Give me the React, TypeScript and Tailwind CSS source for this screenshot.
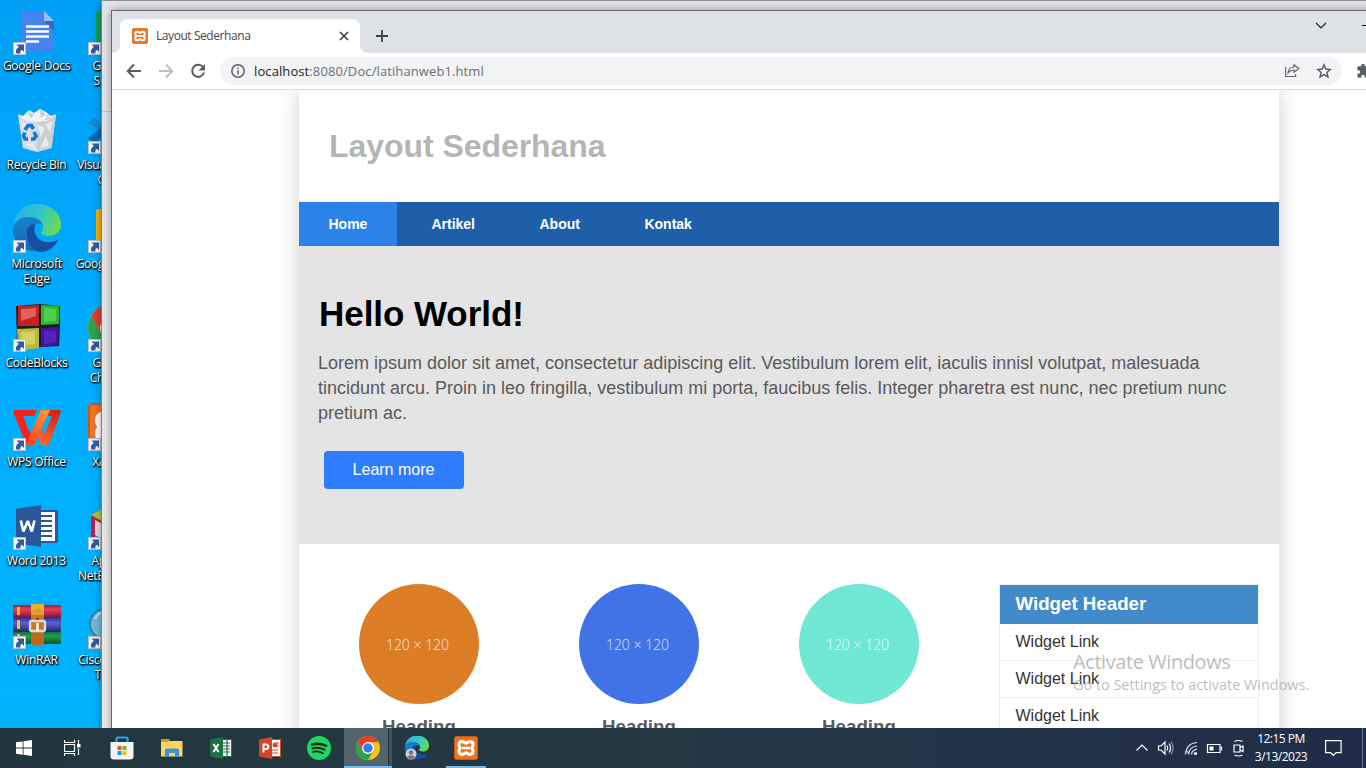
import type { ReactNode } from "react";

function ShortcutArrow() {
  return (
    <g>
      <rect x="0.5" y="35.5" width="12" height="12" fill="#f7f7f7" stroke="#b9bcc0" />
      <path d="M3.500 37.500h7.500V45L8.800 42.800c-1.300 1-1.700 2.200-1.300 3.700H3.300C2.300 43.300 3.700 40.800 6 39.900Z" fill="#2f5c9e" />
    </g>
  );
}

function DocsIcon() {
  return (
    <g>
      <path d="M9 4h22l10 10v28a2 2 0 0 1-2 2H10a2 2 0 0 1-2-2V6a2 2 0 0 1 1-2Z" fill="#4583f0" />
      <path d="M31 4v10h10Z" fill="#9dbff9" />
      <path d="M31 14h10v10Z" fill="#3567cf" />
      <path d="M13 19.500h23M13 24.500h23M13 29.500h23M13 34.500h13" stroke="#fff" strokeWidth="2.400" />
    </g>
  );
}

function BinIcon() {
  return (
    <g>
      <path d="M5 9l5 33 14 4 14.500-4L43 9l-9 3H14Z" fill="#d9dde0" />
      <path d="M24 12h10l9-3-4.500 33L24 46Z" fill="#c9ced2" />
      <path d="M8 12l8-8 5 3 6-4 6 3 7 6-6 3-10 1-10-1Z" fill="#f0f2f3" />
      <path d="M15 6l6 2-3 5ZM27 4l6 4-5 4ZM34 8l5 5-7 1Z" fill="#c9ced2" />
      <path d="M5 9l19 5 19-5" stroke="#f8fafa" strokeWidth="1" fill="none" />
      <path d="M24 18l8 4-4 9ZM33 30l-6 12 9-2ZM12 38l8-1 3 7Z" fill="#e9ecee" />
      <path d="M32 18l8-3-3 12ZM8 16l6 2-4 6Z" fill="#e4e7e9" />
      <g fill="none" stroke="#0f7cd6" strokeWidth="3.600">
        <path d="M12 24l3-4.500h3.500l2 3.500" />
        <path d="M21 26l2 4-2 3h-3" />
        <path d="M15 33h-3l-1.500-3.500 1.500-3" />
      </g>
    </g>
  );
}

function EdgeIcon() {
  return (
    <g>
      <defs>
        <linearGradient id="edgeTop" x1="0" y1="0.300" x2="1" y2="0.600">
          <stop offset="0" stopColor="#2aaee4" />
          <stop offset="0.500" stopColor="#34c3cf" />
          <stop offset="1" stopColor="#68dc49" />
        </linearGradient>
        <linearGradient id="edgeMid" x1="0" y1="0" x2="0.300" y2="1">
          <stop offset="0" stopColor="#1485cf" />
          <stop offset="1" stopColor="#1a66b5" />
        </linearGradient>
      </defs>
      <path d="M0 22C1 8 11 -1 24 -1c14 0 24 9 24 20 0 8-6 12-12 12-5 0-8-1.500-8-3 0-1.500 2-2 2-6 0-5-6-10-14-10C8 12 3 15 0 22Z" fill="url(#edgeTop)" />
      <path d="M0 24c1-8 8-12 15-12 9 0 14 4 15 9-1-2-4-3-7-2-4 4-5 9-3 15 2 5 5 9 10 11.500C12 49 0 39 0 24Z" fill="url(#edgeMid)" />
      <path d="M22 19c-7 1-9 6-8 12 2 10 8 16 15 16 7-1 12-5 15.500-10.500.5-1-.2-1.500-1-1-9 4-20 1-22-9-.3-3 .1-6 .5-7.500Z" fill="#124f9e" />
    </g>
  );
}

function BlocksIcon() {
  return (
    <g>
      <path d="M3 2l24-2 20 2v19l-1 21-20 1-12 3-10-5Z" fill="#122015" />
      <path d="M5 2l21-1v21L5 22Z" fill="#c81f1f" />
      <path d="M8 5l15-1v8L8 17Z" fill="#e0605a" />
      <path d="M28 1l18 1v18l-18 1Z" fill="#30b534" />
      <path d="M31 4l12 1v12l-12 1Z" fill="#4bcf4d" />
      <path d="M4 25l22-1v20l-12 2-9-4Z" fill="#bdb83b" />
      <path d="M8 28l14-1v13l-14 1Z" fill="#d6d060" />
      <path d="M28 24l18-1-1 18-17 2Z" fill="#4112a5" />
      <path d="M31 27h12v11l-12 2Z" fill="#5424b8" />
    </g>
  );
}

function WpsIcon() {
  return (
    <g>
      <defs>
        <linearGradient id="wpsBar" x1="1" y1="0" x2="0.400" y2="1">
          <stop offset="0" stopColor="#ff9a3c" />
          <stop offset="1" stopColor="#fb4a1e" />
        </linearGradient>
        <linearGradient id="wpsEnd" x1="0.800" y1="0" x2="0.300" y2="1">
          <stop offset="0" stopColor="#d81d10" />
          <stop offset="1" stopColor="#ff6a2a" />
        </linearGradient>
      </defs>
      <path d="M2 7h22l-2.500 6H10.500L20 36v7h-4q-2 0-3-2L.3 9.500Q-.2 7 2 7Z" fill="#fb2318" />
      <path d="M34 7h12q2.500 0 1.800 2.500L36 41q-1 2-3 2h-2q-2 0-3-2l-5-12 3.500-9 4.500 12 8-19H32Z" fill="url(#wpsEnd)" />
      <path d="M28 7h9L22 41q-1 2-3 2h-3q-2 0-3-2Z" fill="url(#wpsBar)" />
      <path d="M10.500 13h11L15.500 28Z" fill="#00aefd" />
    </g>
  );
}

function WordIcon() {
  return (
    <g>
      <path d="M25 8h18a2 2 0 0 1 2 2v29a2 2 0 0 1-2 2H25Z" fill="#2b569a" />
      <path d="M26 10h16v29H26Z" fill="#fff" />
      <path d="M28 14h11M28 19h11M28 24h11M28 29h11M28 34h11" stroke="#2b569a" strokeWidth="2.200" />
      <path d="M3 7l25-4v42L3 41Z" fill="#2b569a" />
      <path d="M7.800 18.500l2.600 11L14.800 19l4 10.500 2.700-11" fill="none" stroke="#fff" strokeWidth="2.600" strokeLinejoin="bevel" />
    </g>
  );
}

function RarIcon() {
  return (
    <g>
      <defs>
        <linearGradient id="rarRed" x1="0" y1="0" x2="0" y2="1">
          <stop offset="0" stopColor="#a91d3b" /><stop offset="0.350" stopColor="#e43e5c" /><stop offset="1" stopColor="#7d132b" />
        </linearGradient>
        <linearGradient id="rarBlue" x1="0" y1="0" x2="0" y2="1">
          <stop offset="0" stopColor="#33339c" /><stop offset="0.350" stopColor="#5d60d2" /><stop offset="1" stopColor="#24246f" />
        </linearGradient>
        <linearGradient id="rarGreen" x1="0" y1="0" x2="0" y2="1">
          <stop offset="0" stopColor="#0c7733" /><stop offset="0.350" stopColor="#22a14d" /><stop offset="1" stopColor="#07521f" />
        </linearGradient>
      </defs>
      <rect x="0" y="4" width="48" height="13" rx="1" fill="url(#rarRed)" />
      <rect x="0" y="17" width="48" height="14" rx="1" fill="url(#rarBlue)" />
      <rect x="0" y="31" width="48" height="12" rx="1" fill="url(#rarGreen)" />
      <path d="M4 6h3v8H4ZM4 19h3v9H4ZM4 33h3v8H4Z" fill="#f6bd26" />
      <path d="M18 3h13v41H18Z" fill="#bb6b1d" />
      <path d="M18 3h13v10H18Z" fill="#eab22d" />
      <path d="M18 12c2-5 11-5 13 0v17H18Z" fill="#c97723" />
      <path d="M18 12c2-5 11-5 13 0v2H18Z" fill="#e09a38" />
      <circle cx="24.500" cy="18" r="1.300" fill="#54300f" />
      <rect x="17" y="20" width="15" height="10" rx="2" fill="none" stroke="#d9dde2" strokeWidth="2.400" />
      <path d="M24.500 22v8" stroke="#f4f4f4" strokeWidth="2.500" />
    </g>
  );
}

function XamppGlyph() {
  return (
    <g>
      <rect x="0.500" y="0.500" width="23" height="23" rx="2" fill="#ee7424" stroke="#c85a16" />
      <path d="M8.200 5.600c2 0 2.400 1.600 3.800 1.600s1.800-1.600 3.800-1.600c2.200 0 3.300 1.500 3.300 3.300 0 1.600-1.200 2-1.200 3.100s1.200 1.500 1.200 3.100c0 1.800-1.100 3.300-3.300 3.300-2 0-2.400-1.600-3.800-1.600s-1.800 1.600-3.800 1.600c-2.200 0-3.300-1.500-3.300-3.300 0-1.600 1.200-2 1.200-3.100S4.900 10.500 4.900 8.900c0-1.800 1.100-3.300 3.300-3.300Z" fill="none" stroke="#fff" strokeWidth="3" />
      <path d="M8 12h8" stroke="#fff" strokeWidth="2.600" />
    </g>
  );
}

function ChromeGlyph() {
  return (
    <g>
      <circle cx="24" cy="24" r="24" fill="#fbc116" />
      <path d="M3.200 12A24 24 0 0 0 24 48L34.400 30 24 24 13.600 30Z" fill="#2ba24c" />
      <path d="M24 12h20.800L34 30Z" fill="#fbc116" />
      <path d="M3.200 12A24 24 0 0 1 44.800 12H24L13 29Z" fill="#e33b2e" />
      <circle cx="24" cy="24" r="12" fill="#fff" />
      <circle cx="24" cy="24" r="9.500" fill="#3a7cec" />
    </g>
  );
}

type Shortcut = { label: string[]; art: ReactNode; arrow?: boolean };

const columnOne: Shortcut[] = [
  { label: ["Google Docs"], art: <DocsIcon /> },
  { label: ["Recycle Bin"], art: <BinIcon />, arrow: false },
  { label: ["Microsoft", "Edge"], art: <EdgeIcon /> },
  { label: ["CodeBlocks"], art: <BlocksIcon /> },
  { label: ["WPS Office"], art: <WpsIcon /> },
  { label: ["Word 2013"], art: <WordIcon /> },
  { label: ["WinRAR"], art: <RarIcon /> },
];

const columnTwo: Shortcut[] = [
  { label: ["Google", "Sheets"], art: <g><rect x="8" y="4" width="33" height="40" rx="2" fill="#129d58" /><path d="M13 18h22v18H13Z" fill="#fff" /></g> },
  { label: ["Visual Studio", "Code"], art: <g><path d="M0 17l6-5 42 28-8 6Z" fill="#1688d6" /><path d="M0 32l6 5L48 8l-9-6Z" fill="#0667ae" /></g> },
  { label: ["Google Slides"], art: <g><rect x="8" y="4" width="33" height="40" rx="2" fill="#f2b10c" /><path d="M13 17h22v16H13Z" fill="#fff" /></g> },
  { label: ["Google", "Chrome"], art: <ChromeGlyph /> },
  { label: ["XAMPP"], art: <g transform="scale(2)"><XamppGlyph /></g> },
  { label: ["Apache", "NetBeans I..."], art: <g><path d="M3 13L24 1v23L3 37Z" fill="#b3234d" /><path d="M3 13L24 1l21 12-21 12Z" fill="#a5c73a" /><path d="M7 18l17 9v15L7 33Z" fill="#e7dce0" /></g> },
  { label: ["Cisco Packet", "Tracer"], art: <g><circle cx="17" cy="23" r="15" fill="#6fb9dd" stroke="#39718f" strokeWidth="1.500" /><path d="M7 18c2-5 7-7 11-7" stroke="#c3e6f5" strokeWidth="2" fill="none" /></g> },
];

function ShortcutColumn({ items }: { items: Shortcut[] }) {
  return (
    <div className="flex w-[75px] shrink-0 flex-col">
      {items.map((s) => (
        <div key={s.label[0] + s.label[1]} className="flex h-[99px] flex-col items-center gap-[3px]">
          <svg width="48" height="48" viewBox="0 0 48 48" className="shrink-0 overflow-visible">
            {s.art}
            {s.arrow !== false && <ShortcutArrow />}
          </svg>
          <div className="text-center text-[12px] leading-[15px] tracking-[-0.25px] whitespace-nowrap text-white [text-shadow:1px_1px_2px_#000,0_1px_2px_#000,1px_1px_1px_rgba(0,0,0,0.8)]">
            {s.label.map((line) => <div key={line}>{line}</div>)}
          </div>
        </div>
      ))}
    </div>
  );
}

function TabStrip() {
  return (
    <div className="flex h-[42px] shrink-0 items-end bg-[#dee1e6]">
      <svg width="8" height="34" className="shrink-0"><path d="M8 26v8H0a8 8 0 0 0 8-8Z" fill="#fff" /></svg>
      <div className="flex h-[34px] w-[240px] items-center rounded-t-lg bg-white pr-[11px] pl-3">
        <svg width="16" height="16" viewBox="0 0 24 24"><XamppGlyph /></svg>
        <span className="ml-2 text-[12px] tracking-[-0.43px] whitespace-nowrap text-[#45484c]">Layout Sederhana</span>
        <svg width="10" height="10" className="ml-auto"><path d="M1 1l8 8M9 1l-8 8" stroke="#3c4043" strokeWidth="1.700" /></svg>
      </div>
      <svg width="8" height="34" className="shrink-0"><path d="M0 26v8h8a8 8 0 0 1-8-8Z" fill="#fff" /></svg>
      <svg width="13" height="34" className="ml-[7px]"><path d="M7 11v12M1 17h12" stroke="#3c4043" strokeWidth="1.800" /></svg>
      <div className="flex h-[42px] flex-1 pt-[11px]">
        <svg width="12" height="8" className="ml-[927px] shrink-0"><path d="M1 1l5 5 5-5" fill="none" stroke="#222" strokeWidth="1.200" /></svg>
        <svg width="12" height="8" className="ml-[35px] shrink-0"><path d="M0 3.500h12" stroke="#111" /></svg>
      </div>
    </div>
  );
}

function Toolbar() {
  return (
    <div className="flex h-[37px] shrink-0 items-center border-b border-[#dadce0] bg-white">
      <svg width="108" height="36" className="shrink-0">
        <g fill="none" strokeWidth="2">
          <path d="M29 18H16M22 11.500L15.700 18l6.300 6.500" stroke="#5a5e63" />
          <path d="M47 18h13M54 11.500L60.300 18 54 24.500" stroke="#bcbec1" />
          <path d="M91 14.200A6 6 0 1 0 92 19.500" stroke="#5a5e63" />
        </g>
        <path d="M93 11v6.500h-6.500Z" fill="#5a5e63" />
      </svg>
      <div className="flex h-7 w-[1122px] shrink-0 items-center rounded-full bg-[#f1f3f4] pr-[10px] pl-[11px]">
        <svg width="14" height="14" className="shrink-0"><circle cx="7" cy="7" r="6.200" fill="none" stroke="#5f6368" strokeWidth="1.500" /><path d="M7 6.200v4.300M7 3.500v1.600" stroke="#5f6368" strokeWidth="1.500" /></svg>
        <span className="mt-px ml-[9px] text-[13px] tracking-[0.1px] whitespace-nowrap text-[#6b6f74]"><span className="text-[#222427]">localhost</span>:8080/Doc/latihanweb1.html</span>
        <svg width="16" height="16" className="ml-auto" fill="none" stroke="#65696e" strokeWidth="1.200"><path d="M1.600 4v9.500h10V11M4 10c.5-4 3-6 6-6V1.800L14.800 5.500 10 9.300V7C7 7 5.500 8 4 10Z" /></svg>
        <svg width="16" height="16" viewBox="0 0 24 24" className="ml-[16px]"><path d="M12 2.800l2.700 6.300 6.800.6-5.200 4.500 1.600 6.700-5.900-3.600-5.900 3.600 1.600-6.700-5.200-4.500 6.800-.6Z" fill="none" stroke="#5a5e63" strokeWidth="2.200" /></svg>
      </div>
      <svg width="16" height="16" viewBox="0 0 24 24" className="ml-[14px] shrink-0"><path d="M20.500 11H19V7a2 2 0 0 0-2-2h-4V3.500a2.500 2.500 0 0 0-5 0V5H4a2 2 0 0 0-2 2v3.800h1.500a2.700 2.700 0 0 1 0 5.400H2V20a2 2 0 0 0 2 2h3.800v-1.500a2.700 2.700 0 0 1 5.400 0V22H17a2 2 0 0 0 2-2v-4h1.500a2.500 2.500 0 0 0 0-5Z" fill="#5a5e63" /></svg>
    </div>
  );
}

const circles = ["bg-[#db7e25]", "bg-[#3f73e6]", "bg-[#71e8d5]"];

function Site() {
  return (
    <div className="min-h-0 flex-1 overflow-hidden bg-white pl-[187px] [font-family:'Liberation_Sans',Arial,sans-serif]">
      <div className="h-[900px] w-[980px] bg-white shadow-[0_0_20px_rgba(0,0,0,0.2)]">
        <header className="flex h-28 items-center pl-[30px]">
          <h1 className="text-[32px] leading-9 font-bold tracking-[-0.05px] text-[#b5b5b5]">Layout Sederhana</h1>
        </header>
        <nav className="flex h-11 gap-[4.500px] bg-[#1f5faa] text-[14px] leading-[44px] font-bold text-white">
          <a className="bg-[#2b83ea] px-[29.500px]">Home</a>
          <a className="px-[30px]">Artikel</a>
          <a className="px-[30px]">About</a>
          <a className="px-[30px]">Kontak</a>
        </nav>
        <section className="h-[298px] bg-[#e4e4e4] px-5 pt-[47px]">
          <h1 className="text-[35px] leading-[42px] font-bold tracking-[-0.05px] text-black">Hello World!</h1>
          <p className="mt-[16px] -ml-px text-[18px] leading-[25px] text-[#5a5a5a]">Lorem ipsum dolor sit amet, consectetur adipiscing elit. Vestibulum lorem elit, iaculis innisl volutpat, malesuada tincidunt arcu. Proin in leo fringilla, vestibulum mi porta, faucibus felis. Integer pharetra est nunc, nec pretium nunc pretium ac.</p>
          <a className="mt-[25px] ml-[5px] flex h-[38px] w-[140px] items-center justify-center rounded bg-[#2f7dff] pr-px text-base text-white">Learn more</a>
        </section>
        <div className="flex pt-10 pl-[10px]">
          {circles.map((c) => (
            <div key={c} className="flex w-[220px] flex-col items-center">
              <div className={"flex h-[120px] w-[120px] items-center justify-center rounded-full pr-[3px] text-[14px] font-light text-white/80 [font-family:'Open_Sans',sans-serif] " + c}>120 × 120</div>
              <h3 className="mt-[11px] text-[18.720px] leading-6 font-bold text-[#5a5a5a]">Heading</h3>
            </div>
          ))}
          <aside className="ml-[30px] w-[260px] border border-[#eee]">
            <h3 className="h-[39px] bg-[#428bca] pl-[15.500px] text-[18.720px] leading-[37px] font-bold text-white">Widget Header</h3>
            {[1, 2, 3].map((n) => (
              <a key={n} className="block h-[37px] border-b border-[#eee] pl-[15.500px] text-base leading-[35px] text-[#333]">Widget Link</a>
            ))}
          </aside>
        </div>
      </div>
    </div>
  );
}

function TaskButton({ children, className = "" }: { children: ReactNode; className?: string }) {
  return <div className={"flex h-10 w-[49px] shrink-0 items-center justify-center " + className}>{children}</div>;
}

function Taskbar() {
  return (
    <div className="flex h-10 shrink-0 bg-linear-to-r from-[#21363e] via-[#243944] to-[#202c49] text-white">
      <TaskButton className="pr-[2px]">
        <svg width="16" height="16"><path d="M0 2.300L6.700 1.400V7.500H0ZM7.500 1.300L16 0v7.500H7.500ZM0 8.500h6.700v6.200L0 13.800ZM7.500 8.500H16V16L7.500 14.800Z" fill="#fff" /></svg>
      </TaskButton>
      <TaskButton className="pr-[3px]">
        <svg width="17" height="16" fill="none" stroke="#fff"><path d="M.5 0v2.500h10V0M.5 4.500h10v7H.5ZM.5 16v-2.500h10V16M14.500 0v4M14.500 8.500V15" strokeWidth="1.200" /><rect x="13.500" y="4.500" width="2.500" height="2.500" fill="#fff" /></svg>
      </TaskButton>
      <TaskButton className="pr-px">
        <svg width="24" height="24"><path d="M6.500 8V2.500Q6.500 1.500 7.500 1.500H16.500Q17.500 1.500 17.500 2.500V8" fill="none" stroke="#24a8e0" strokeWidth="2.200" /><path d="M.5 6h23v14a3.500 3.500 0 0 1-3.500 3.500H4A3.500 3.500 0 0 1 .5 20Z" fill="#f4f4f4" /><path d="M7.500 10h4v4h-4Z" fill="#f25022" /><path d="M12.500 10h4v4h-4Z" fill="#7fba00" /><path d="M7.500 15h4v4h-4Z" fill="#00a4ef" /><path d="M12.500 15h4v4h-4Z" fill="#ffb900" /></svg>
      </TaskButton>
      <TaskButton>
        <svg width="22" height="18"><path d="M0 2h21.500v15.500H0Z" fill="#fcd466" /><path d="M0 0h9l-2 3H0Z" fill="#dc9c0f" /><path d="M4 18v-7q0-1.500 1.500-1.500h11Q18 9.500 18 11v7h-4v-4H8v4Z" fill="#3c95d8" /></svg>
      </TaskButton>
      <TaskButton>
        <svg width="22" height="22"><path d="M12 2.500h9.500v17H12Z" fill="#fff" stroke="#1e7145" /><path d="M13 6h7M13 9h7M13 12h7M13 15h7M17 3v16" stroke="#1e7145" strokeWidth="1.200" /><path d="M0 2.500L13 0v22L0 19.500Z" fill="#1e7145" /><path d="M3.500 7l5 8M8.500 7l-5 8" stroke="#fff" strokeWidth="1.900" /></svg>
      </TaskButton>
      <TaskButton>
        <svg width="22" height="22"><path d="M12 2.500h9.500v17H12Z" fill="#fff" stroke="#d24726" /><circle cx="16" cy="8" r="2.500" fill="#d24726" /><path d="M13 13h6M13 16h6M17 6h3M17 9h3" stroke="#d24726" strokeWidth="1.200" /><path d="M0 2.500L13 0v22L0 19.500Z" fill="#d24726" /><path d="M4.500 15.500V7.500H7a2.200 2.200 0 0 1 0 4.600H4.500" fill="none" stroke="#fff" strokeWidth="1.900" /></svg>
      </TaskButton>
      <TaskButton>
        <svg width="24" height="24" fill="none" strokeLinecap="round"><circle cx="12" cy="12" r="12" fill="#1ed760" /><path d="M5 8.500c4.500-1.300 9.500-1 14 1.300" stroke="#12251c" strokeWidth="2.400" /><path d="M5.500 12.500c4.200-1.200 8.300-.7 12 1.200" stroke="#12251c" strokeWidth="2" /><path d="M6 16c3.500-1 7-.5 10 1.200" stroke="#12251c" strokeWidth="1.700" /></svg>
      </TaskButton>
      <div className="ml-px flex h-10 w-12 shrink-0 border-b-2 border-[#76b9ed]">
        <div className="flex w-11 items-center justify-center bg-[#53646c] pt-[2px] pl-1"><svg width="24" height="24" viewBox="0 0 48 48"><ChromeGlyph /></svg></div>
        <div className="w-1 border-l border-[#26363e] bg-[#44545c]" />
      </div>
      <TaskButton>
        <svg width="24" height="24" viewBox="0 0 48 48"><EdgeIcon /><circle cx="12" cy="36" r="11" fill="#d1d1d1" /><circle cx="12" cy="33" r="4.500" fill="#777" /><path d="M4 43c1-6 15-6 16 0-5 4-11 4-16 0Z" fill="#777" /></svg>
      </TaskButton>
      <div className="ml-[5px] flex h-10 w-10 shrink-0 items-center justify-center border-b-2 border-[#76b9ed] pt-[2px]"><svg width="24" height="24"><XamppGlyph /></svg></div>
      <div className="ml-auto flex shrink-0 items-center">
        <svg width="110" height="40" fill="none" stroke="#fff" strokeWidth="1.200">
          <path d="M0.500 22.500L6 17l5.500 5.500" />
          <path d="M22.500 18h2.500l4-4v12l-4-4h-2.500Z" />
          <path d="M31 17.500q1.500 2.500 0 5M33 15.500q3 4.500 0 9" />
          <path d="M35 13.500q4 6.500 0 13" stroke="#8d99a5" />
          <path d="M49.500 26.500Q50 15.500 61 14.500M52.500 26.500Q53 19 61 18M55.500 26.500Q56 22 61 21.200" stroke="#d7dde2" />
          <path d="M50 22l3 4" stroke="#d7dde2" />
          <circle cx="59.500" cy="25.500" r="1.600" fill="#fff" stroke="none" />
          <path d="M71.500 16.500h12.500v8H71.500ZM85.500 18.500v4" />
          <path d="M73.500 18.500h4v4h-4Z" fill="#fff" stroke="none" />
          <path d="M98 17h6v7h-6ZM104 19.500l3-1.500v5.500l-3-1.500M98.500 13.500q4-2 8 0M98.500 27q4 2 8 0" />
        </svg>
        <div className="w-[70px] text-center text-[12px] leading-[18px] tracking-[-0.5px] whitespace-nowrap"><div>12:15 PM</div><div>3/13/2023</div></div>
        <svg width="17" height="18" className="ml-[9px]" fill="none" stroke="#fff" strokeWidth="1.200"><path d="M.6 1.600h15.500v12h-5L8.300 16.500 5.600 13.600h-5Z" /></svg>
        <div className="ml-[20px] h-10 w-1 border-l border-[#66718a]" />
      </div>
    </div>
  );
}

export default function App() {
  return (
    <div className="relative flex h-[768px] w-[1366px] flex-col overflow-hidden [font-family:'Open_Sans','Noto_Sans',sans-serif]">
      <div className="relative h-[728px] shrink-0 overflow-hidden bg-linear-to-b from-[#009ff5] via-[#00adff] to-[#00b4fc]">
        <div className="-ml-px flex pt-[7px]">
          <ShortcutColumn items={columnOne} />
          <ShortcutColumn items={columnTwo} />
        </div>
        <div className="absolute top-0 left-[101px] h-[728px] w-[1280px] border-t border-l border-t-[#8f8d94] border-l-[#5e8aa8] bg-linear-to-b from-[#e5e4ea] to-[#ebebeb] shadow-[0_0_8px_rgba(0,0,0,0.35)]">
          <div className="mt-[110px] h-px w-[10px] bg-[#c8c8cc]" />
        </div>
        <div className="absolute top-[10px] left-[111px] flex h-[728px] w-[1270px] flex-col border-t border-l border-[#66676b] shadow-[0_0_9px_rgba(0,0,0,0.35)]">
          <TabStrip />
          <Toolbar />
          <Site />
        </div>
        <div className="absolute top-[649px] left-[1073px] whitespace-nowrap text-[#a0a0a0]/70">
          <div className="text-[20px] leading-[26px] tracking-[-0.42px]">Activate Windows</div>
          <div className="text-[14.500px] leading-[20px] tracking-[-0.04px]">Go to Settings to activate Windows.</div>
        </div>
      </div>
      <Taskbar />
    </div>
  );
}
